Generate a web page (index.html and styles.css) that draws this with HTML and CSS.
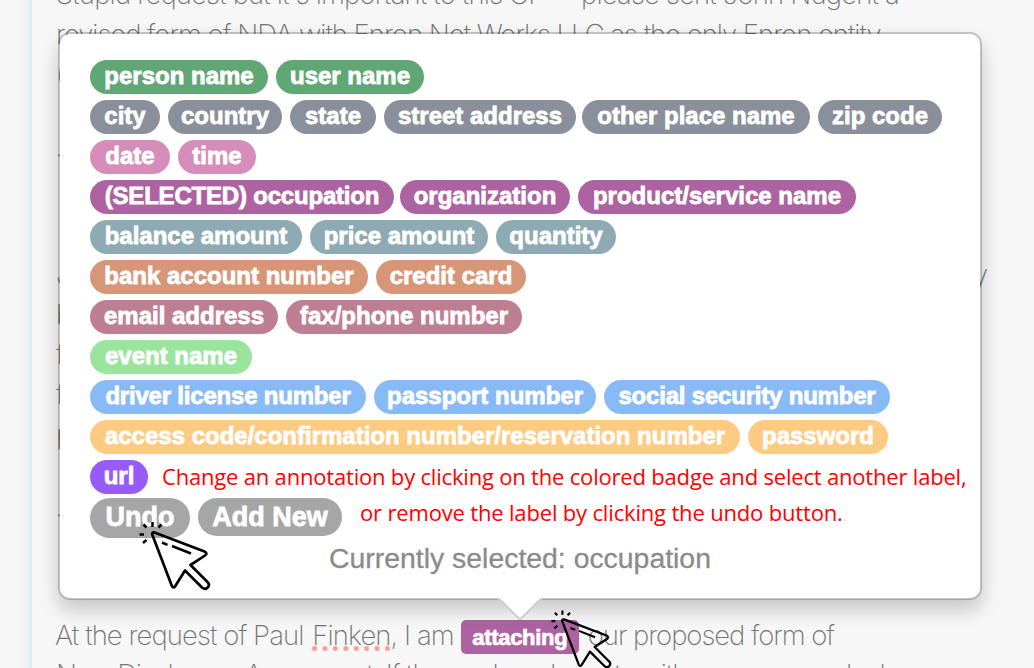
FILE: index.html
```html
<!DOCTYPE html>
<html lang="en">
<head>
<meta charset="utf-8">
<title>Annotation label picker</title>
<link rel="stylesheet" href="styles.css">
</head>
<body>
<div class="page">
  <aside class="gutter"></aside>
  <main class="document">
    <p class="line l1">Stupid request but it's important to this CP -- please sent John Nugent a</p>
    <p class="line l2">revised form of NDA with Enron Net Works LLC as the only Enron entity</p>
    <p class="line">(</p>
    <p class="line"></p>
    <p class="line">-</p>
    <p class="line"></p>
    <p class="line"></p>
    <p class="line split"><span>J</span><span>y</span></p>
    <p class="line">b</p>
    <p class="line">f</p>
    <p class="line">f</p>
    <p class="line">p</p>
    <p class="line"></p>
    <p class="line">-</p>
    <p class="line"></p>
    <p class="line"></p>
    <p class="line tagged"><span class="l3">At the request of Paul <span class="misspelled">Finken</span>, I am</span><span class="tag">attaching</span><span class="l4">our proposed form of</span></p>
    <p class="line l5">Non-Disclosure Agreement. If the enclosed meets with your approval, please</p>
  </main>
</div>

<section class="popover">
  <div class="row green"><span class="pill w178">person name</span><span class="pill w148">user name</span></div>
  <div class="row slate"><span class="pill w70">city</span><span class="pill w114">country</span><span class="pill w86">state</span><span class="pill w192">street address</span><span class="pill w228 tight">other place name</span><span class="pill w124">zip code</span></div>
  <div class="row pink"><span class="pill w80">date</span><span class="pill w78">time</span></div>
  <div class="row purple"><span class="pill w304 snug">(SELECTED) occupation</span><span class="pill w170 tight">organization</span><span class="pill w278">product/service name</span></div>
  <div class="row teal"><span class="pill w212">balance amount</span><span class="pill w178">price amount</span><span class="pill w120">quantity</span></div>
  <div class="row orange"><span class="pill w278">bank account number</span><span class="pill w150">credit card</span></div>
  <div class="row mauve"><span class="pill w188">email address</span><span class="pill w236">fax/phone number</span></div>
  <div class="row mint"><span class="pill w162">event name</span></div>
  <div class="row blue"><span class="pill w276 snug">driver license number</span><span class="pill w222">passport number</span><span class="pill w286 snug">social security number</span></div>
  <div class="row amber"><span class="pill w650">access code/confirmation number/reservation number</span><span class="pill w140">password</span></div>
  <div class="row violet"><span class="pill w58">url</span><span class="note n1">Change an annotation by clicking on the colored badge and select another label,</span></div>
  <div class="row actions"><span class="pill undo">Undo</span><span class="pill add">Add New</span><span class="note n2">or remove the label by clicking the undo button.</span></div>
  <p class="status">Currently selected: occupation</p>
  <svg class="arrow" width="44" height="24" viewBox="0 0 44 24"><path d="M0 0H44V2L22 23 0 2Z" fill="#fff"/><path d="M1 1.500L22 22.500 43 1.500" fill="none" stroke="#c4c4c4" stroke-width="1.500"/><path d="M2 0H42L40 2H4Z" fill="#fff"/></svg>
</section>

<svg class="cursor first" width="72" height="72" viewBox="0 0 72 72">
  <path class="body" d="M13.200 15.500Q12.800 12.800 15.500 13.500L65.500 32.500Q69 34.500 66 36.500L51.500 46 68 62.500C72.500 66.500 67.500 72 63 68.500L46 51.500 36 67.500Q34 69.500 32.800 66.800Z"/>
  <path class="dash" d="M23 23.500L28.500 25.800M33 27L52 34.500M13.500 8V3M19.500 8.500L22.500 5.500M7.500 8.500L4.500 5.500M5 15.500H0.500M7.500 21L4 24"/>
</svg>
<svg class="cursor second" width="61" height="61" viewBox="0 0 72 72">
  <path class="body" d="M13.200 15.500Q12.800 12.800 15.500 13.500L65.500 32.500Q69 34.500 66 36.500L51.500 46 68 62.500C72.500 66.500 67.500 72 63 68.500L46 51.500 36 67.500Q34 69.500 32.800 66.800Z"/>
  <path class="dash" d="M23 23.500L28.500 25.800M33 27L52 34.500M13.500 8V3M19.500 8.500L22.500 5.500M7.500 8.500L4.500 5.500M5 15.500H0.500M7.500 21L4 24"/>
</svg>
</body>
</html>
```
FILE: styles.css
```css
* { box-sizing: border-box; }
body { margin: 0; width: 1034px; height: 668px; overflow: hidden; position: relative; background: #f7f7f7; font-family: "Liberation Sans", Arial, sans-serif; }
p { margin: 0; }
.page { display: flex; height: 668px; overflow: hidden; }
.gutter { width: 32px; flex: none; background: linear-gradient(to right, #f7f7f7 20px, #e9f0f5 28px, #d7e8f3 32px); }
.document { width: 956px; margin-top: -26px; padding-left: 24px; }
.line { height: 40px; line-height: 40px; font-family: Inter, "Liberation Sans", sans-serif; font-weight: 200; font-size: 27.500px; color: #747474; white-space: nowrap; }
.l1 { letter-spacing: -.83px; }
.l2 { letter-spacing: -1.02px; }
.l3 { letter-spacing: -.92px; margin-left: -1px; }
.l4 { letter-spacing: -1.05px; }
.l5 { letter-spacing: -1.1px; }
.split { display: flex; justify-content: space-between; }
.tagged { display: flex; align-items: flex-start; padding-top: 1px; }
.misspelled { margin-left: 2px; text-decoration: underline dotted #ff9e97 5px; text-underline-offset: 1px; text-decoration-skip-ink: none; }
.tag { width: 118px; height: 34px; margin: 5px 9px 0 7px; border-radius: 5px; background: #ad63a1; color: #fff; font: bold 22px/35px "Liberation Sans", sans-serif; text-align: center; letter-spacing: -.3px; -webkit-text-stroke: .7px #fff; }

.popover { position: absolute; left: 58px; top: 32px; width: 924px; height: 568px; padding: 26px 0 0 30px; background: #fff; background-clip: padding-box; border: 2px solid rgba(0,0,0,.2); border-radius: 12px; box-shadow: 0 10px 20px rgba(0,0,0,.2); }
.row { display: flex; gap: 8px; height: 34px; margin-bottom: 6px; white-space: nowrap; }
.pill { flex: none; height: 34px; border-radius: 17px; color: #fff; font-weight: bold; font-size: 24px; line-height: 32px; text-align: center; -webkit-text-stroke: .8px #fff; }
.pill.tight { margin-left: -2px; }
.pill.snug { letter-spacing: -.2px; }
.w58 { width: 58px; } .w70 { width: 70px; } .w78 { width: 78px; } .w80 { width: 80px; }
.w86 { width: 86px; } .w114 { width: 114px; } .w120 { width: 120px; } .w124 { width: 124px; }
.w140 { width: 140px; } .w148 { width: 148px; } .w150 { width: 150px; } .w162 { width: 162px; }
.w170 { width: 170px; } .w178 { width: 178px; } .w188 { width: 188px; } .w192 { width: 192px; }
.w212 { width: 212px; } .w222 { width: 222px; } .w228 { width: 228px; } .w236 { width: 236px; }
.w276 { width: 276px; } .w278 { width: 278px; } .w286 { width: 286px; } .w304 { width: 304px; }
.w650 { width: 650px; }
.green .pill { background: #61a675; }
.slate .pill { background: #898f9b; }
.pink .pill { background: #d78dba; }
.purple .pill { background: #ad63a1; }
.teal .pill { background: #8eabb5; }
.orange .pill { background: #d79678; }
.mauve .pill { background: #bf7f93; }
.mint .pill { background: #9ae49d; }
.blue .pill { background: #88bbf5; }
.amber .pill { background: #ffca82; }
.violet .pill { background: #985bfb; }
.violet { margin-bottom: 4px; }
.actions { height: 40px; margin: 0; }
.actions .pill { background: #a6a6a6; font-size: 27px; border-radius: 20px; line-height: 38px; }
.actions .undo { width: 100px; height: 40px; }
.actions .add { width: 144px; height: 38px; }
.note { font-family: "Open Sans", "Noto Sans", sans-serif; color: #f00; font-size: 22px; line-height: 32px; }
.n1 { margin-left: 6px; letter-spacing: -.19px; }
.n2 { margin-left: 10px; line-height: 28px; letter-spacing: -.17px; }
.status { margin-left: -30px; height: 40px; line-height: 41px; text-align: center; font-size: 28.400px; color: #8b8b8b; -webkit-text-stroke: .3px #8b8b8b; }
.arrow { position: absolute; left: 438px; top: 563px; }
.cursor { position: absolute; }
.cursor.first { left: 139px; top: 519px; }
.cursor.second { left: 551px; top: 608px; }
.cursor .body { fill: none; stroke: #000; stroke-width: 2.700; stroke-linejoin: round; }
.cursor .dash { fill: none; stroke: #000; stroke-width: 2.500; }
```
